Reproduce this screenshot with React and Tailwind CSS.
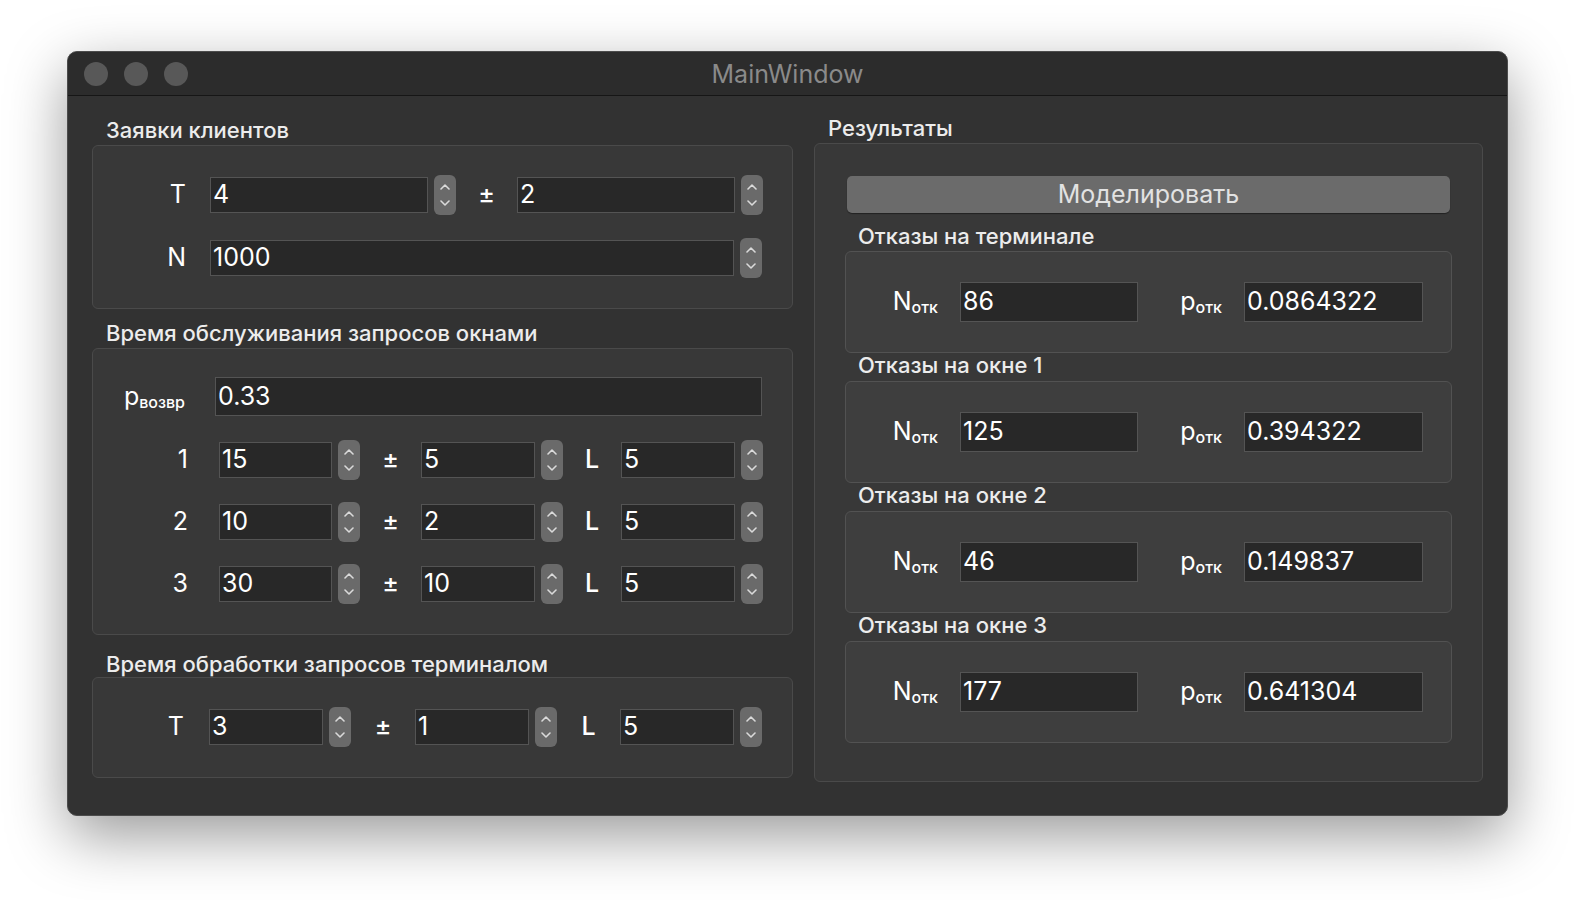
import React from 'react';

const font = { fontFamily: 'Inter, "Noto Sans", sans-serif' };

function Spin() {
  return (
    <div className="flex h-[40px] w-[22px] shrink-0 flex-col items-center justify-center gap-[10px] rounded-[6px] bg-[#6a6a6a]">
      <svg width="10" height="6" viewBox="0 0 10 6">
        <path d="M1 5L5 1L9 5" stroke="#dadada" strokeWidth="1.6" fill="none" strokeLinecap="round" strokeLinejoin="round" />
      </svg>
      <svg width="10" height="6" viewBox="0 0 10 6">
        <path d="M1 1L5 5L9 1" stroke="#dadada" strokeWidth="1.6" fill="none" strokeLinecap="round" strokeLinejoin="round" />
      </svg>
    </div>
  );
}

function Field({ value, w, h = 'h-[36px]' }) {
  return (
    <div className={`${w} ${h} flex shrink-0 items-center border border-[#545454] bg-[#282828] pl-[2px] text-[25px] text-white`}>
      {value}
    </div>
  );
}

function Spinbox({ value, w }) {
  return (
    <div className="flex items-center gap-[6px]">
      <Field value={value} w={w} />
      <Spin />
    </div>
  );
}

function Sep({ children, w }) {
  return <div className={`${w} shrink-0 text-center text-[25px] font-medium text-white`}>{children}</div>;
}

function GroupTitle({ children, className }) {
  return <div className={`h-[24px] pl-[14px] text-[22px] font-medium leading-[28px] text-[#ececec] ${className}`}>{children}</div>;
}

function Sub({ main, sub }) {
  return (
    <span className="text-[25px] text-white">
      {main}
      <span className="relative top-[3px] text-[16px] font-medium">{sub}</span>
    </span>
  );
}

function ServiceRow({ n, a, b, l }) {
  return (
    <div className="flex h-[40px] items-center">
      <div className="w-[95px] shrink-0 text-right text-[25px] text-white">{n}</div>
      <div className="ml-[31px] flex items-center">
        <Spinbox value={a} w="w-[113px]" />
        <Sep w="w-[61px]">±</Sep>
        <Spinbox value={b} w="w-[114px]" />
        <Sep w="w-[58px]">L</Sep>
        <Spinbox value={l} w="w-[114px]" />
      </div>
    </div>
  );
}

function Result({ title, n, p, first }) {
  return (
    <div>
      <div className={`${first ? 'mt-[11px] mb-[3px]' : 'mb-[4px]'} h-[24px] pl-[13px] text-[22px] font-medium leading-[24px] text-[#ececec]`}>{title}</div>
      <div className="flex h-[102px] items-center rounded-[6px] border border-[#525252] bg-[#3e3e3e]">
        <div className="w-[92px] shrink-0 text-right"><Sub main="N" sub="отк" /></div>
        <div className="ml-[22px]"><Field value={n} w="w-[178px]" h="h-[40px]" /></div>
        <div className="w-[84px] shrink-0 text-right"><Sub main="p" sub="отк" /></div>
        <div className="ml-[22px]"><Field value={p} w="w-[179px]" h="h-[40px]" /></div>
      </div>
    </div>
  );
}

export default function App() {
  return (
    <div className="min-h-[900px] bg-white pt-[51px] pl-[67px]" style={font}>
      <div className="flex h-[765px] w-[1441px] flex-col overflow-hidden rounded-[10px] border border-[#4c4c4c] bg-[#323232] shadow-[0_20px_60px_rgba(0,0,0,0.4)]">
        <div className="relative flex h-[44px] shrink-0 items-center border-b border-[#161616] bg-[#2c2c2c] pl-[16px]">
          <div className="flex gap-[16px]">
            <div className="h-[24px] w-[24px] rounded-full bg-[#585858]" />
            <div className="h-[24px] w-[24px] rounded-full bg-[#585858]" />
            <div className="h-[24px] w-[24px] rounded-full bg-[#585858]" />
          </div>
          <div className="absolute inset-0 flex items-center justify-center pt-[3px] text-[25px] text-[#8a8a8a]">MainWindow</div>
        </div>

        <div className="flex gap-[21px] pl-[24px]">
          {/* left column */}
          <div className="w-[701px]">
            <GroupTitle className="mt-[20px] mb-[5px]">Заявки клиентов</GroupTitle>
            <div className="flex h-[164px] flex-col gap-[23px] rounded-[6px] border border-[#4a4a4a] bg-[#383838] pt-[29px]">
              <div className="flex h-[40px] items-center">
                <div className="w-[93px] shrink-0 text-right text-[25px] text-white">T</div>
                <div className="ml-[24px] flex items-center">
                  <Spinbox value="4" w="w-[218px]" />
                  <Sep w="w-[61px]">±</Sep>
                  <Spinbox value="2" w="w-[218px]" />
                </div>
              </div>
              <div className="flex h-[40px] items-center">
                <div className="w-[93px] shrink-0 text-right text-[25px] text-white">N</div>
                <div className="ml-[24px]">
                  <Spinbox value="1000" w="w-[524px]" />
                </div>
              </div>
            </div>

            <GroupTitle className="mt-[10px] mb-[5px]">Время обслуживания запросов окнами</GroupTitle>
            <div className="flex h-[287px] flex-col rounded-[6px] border border-[#4a4a4a] bg-[#383838] pt-[28px]">
              <div className="flex h-[39px] items-center">
                <div className="w-[92px] shrink-0 text-right"><Sub main="p" sub="возвр" /></div>
                <div className="ml-[30px]"><Field value="0.33" w="w-[547px]" h="h-[39px]" /></div>
              </div>
              <div className="mt-[24px] flex flex-col gap-[22px]">
                <ServiceRow n="1" a="15" b="5" l="5" />
                <ServiceRow n="2" a="10" b="2" l="5" />
                <ServiceRow n="3" a="30" b="10" l="5" />
              </div>
            </div>

            <GroupTitle className="mt-[15px] mb-[3px]">Время обработки запросов терминалом</GroupTitle>
            <div className="flex h-[101px] rounded-[6px] border border-[#4a4a4a] bg-[#383838] pt-[29px]">
              <div className="flex h-[40px] items-center">
                <div className="w-[91px] shrink-0 text-right text-[25px] text-white">T</div>
                <div className="ml-[25px] flex items-center">
                  <Spinbox value="3" w="w-[114px]" />
                  <Sep w="w-[64px]">±</Sep>
                  <Spinbox value="1" w="w-[114px]" />
                  <Sep w="w-[63px]">L</Sep>
                  <Spinbox value="5" w="w-[114px]" />
                </div>
              </div>
            </div>
          </div>

          {/* right column */}
          <div className="w-[669px]">
            <div className="mt-[20px] mb-[3px] h-[24px] pl-[14px] text-[22px] font-medium leading-[24px] text-[#ececec]">Результаты</div>
            <div className="h-[639px] rounded-[6px] border border-[#4a4a4a] bg-[#383838] px-[30px] pt-[32px]">
              <div className="mx-[2px] flex h-[37px] items-center justify-center rounded-[5px] bg-[#6b6b6b] text-[25px] text-[#e2e2e2] shadow-[0_1px_1px_rgba(0,0,0,0.4)]">
                Моделировать
              </div>
              <Result first title="Отказы на терминале" n="86" p="0.0864322" />
              <Result title="Отказы на окне 1" n="125" p="0.394322" />
              <Result title="Отказы на окне 2" n="46" p="0.149837" />
              <Result title="Отказы на окне 3" n="177" p="0.641304" />
            </div>
          </div>
        </div>
      </div>
    </div>
  );
}
